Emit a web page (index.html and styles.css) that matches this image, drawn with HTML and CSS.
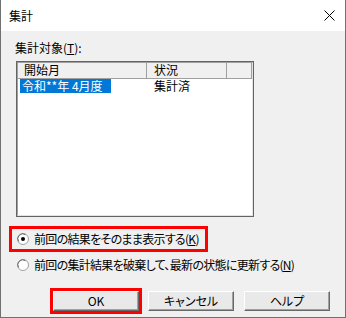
FILE: index.html
```html
<!DOCTYPE html>
<html lang="ja">
<head>
  <meta charset="UTF-8" />
  <title>集計</title>
  <link rel="stylesheet" href="styles.css">
</head>
<body>
  <div class="dialog">
    <div class="titlebar">
      <span class="title">集計</span>
      <svg class="close" width="11" height="11" viewBox="0 0 11 11">
        <path d="M0.5 0.5 L10.5 10.5 M10.5 0.5 L0.5 10.5" stroke="#000" stroke-width="1" fill="none"/>
      </svg>
    </div>

    <div class="content">
      <div class="label">集計対象(<u>T</u>):</div>

      <div class="listview">
        <div class="lv-inner">
          <div class="lv-head">
            <div class="col col-month">開始月</div>
            <div class="col col-status">状況</div>
            <div class="col col-rest"></div>
          </div>
          <div class="lv-row">
            <div class="col col-month"><span class="selected">令和**年 4月度</span></div>
            <div class="col col-status">集計済</div>
          </div>
        </div>
      </div>

      <!-- 集計方法の選択 -->
      <div class="radio-row marked">
        <svg class="radio" width="12" height="12" viewBox="0 0 12 12">
          <circle cx="6" cy="6" r="5.5" fill="#fff" stroke="#a0a0a0"/>
          <path d="M1.6 8.5 A5 5 0 0 1 8.5 1.6" stroke="#696969" fill="none"/>
          <circle cx="6" cy="6" r="2" fill="#000"/>
        </svg>
        <span class="radio-text">前回の結果をそのまま表示する(<u>K</u>)</span>
      </div>
      <div class="radio-row">
        <svg class="radio" width="12" height="12" viewBox="0 0 12 12">
          <circle cx="6" cy="6" r="5.5" fill="#fff" stroke="#a0a0a0"/>
          <path d="M1.6 8.5 A5 5 0 0 1 8.5 1.6" stroke="#696969" fill="none"/>
        </svg>
        <span class="radio-text">前回の集計結果を破棄して、最新の状態に更新する(<u>N</u>)</span>
      </div>

      <div class="buttons">
        <div class="marked-btn"><button class="btn">OK</button></div>
        <button class="btn btn-cancel">キャンセル</button>
        <button class="btn btn-help">ヘルプ</button>
      </div>
    </div>
  </div>
</body>
</html>
```

FILE: styles.css
```css
/* RESET BÁSICO */
* {
  margin: 0;
  padding: 0;
  box-sizing: border-box;
}

body {
  font-family: "Noto Sans CJK JP", "Liberation Sans", sans-serif;
  font-size: 12px;
  line-height: 14px;
  font-feature-settings: "palt";
  color: #000;
  background: #fff;
}

u {
  text-decoration: underline;
  text-underline-offset: 1px;
}

.dialog {
  width: 346px;
  height: 318px;
  background-color: #f0f0f0;
  border: 1px solid #707070;
  border-top: none;
  display: flex;
  flex-direction: column;
}

.titlebar {
  height: 31px;
  background-color: #fff;
  display: flex;
  align-items: center;
  justify-content: space-between;
  padding: 0 10px 0 8px;
}

.title {
  font-size: 12px;
}

.close {
  display: block;
  margin-top: -1px;
}

.content {
  flex: 1;
  padding: 0 7px;
}

.label {
  margin-top: 10px;
  padding-left: 7px;
}

/* Lista de meses */
.listview {
  margin: 6px 0 0 8px;
  width: 238px;
  height: 156px;
  border: 1px solid #646464;
  background-color: #fff;
}

.lv-inner {
  height: 100%;
  border: 1px solid;
  border-color: #a0a0a0 #e3e3e3 #e3e3e3 #a0a0a0;
}

.lv-head {
  display: flex;
  height: 16px;
  background-color: #f0f0f0;
  border-bottom: 1px solid #a0a0a0;
}

.lv-head .col {
  border-right: 1px solid #a0a0a0;
  padding-left: 6px;
}

.lv-row {
  display: flex;
  height: 14px;
}

.col-month {
  width: 129px;
}

.col-status {
  width: 80px;
}

.lv-head .col-status {
  padding-left: 7px;
}

.lv-row .col-month {
  padding-left: 2px;
}

.lv-row .col-status {
  padding-left: 7px;
}

.col-rest {
  flex: 1;
}

.selected {
  display: inline-block;
  background-color: #0078d7;
  color: #fff;
  padding: 0 8px 0 2px;
}

/* Opções */
.radio-row {
  display: flex;
  align-items: center;
  gap: 5px;
  width: 199px;
  height: 26px;
  margin-left: 1px;
  padding-left: 5px;
  border: 3px solid transparent;
  white-space: nowrap;
}

.radio-row.marked {
  margin-top: 9px;
  border-color: #ff0000;
}

.radio {
  display: block;
  flex-shrink: 0;
}

.radio-text {
  letter-spacing: -0.7px;
}

.buttons {
  display: flex;
  align-items: center;
  margin-top: 10px;
  padding-left: 42px;
}

.marked-btn {
  border: 3px solid #ff0000;
}

.btn {
  display: block;
  width: 86px;
  height: 20px;
  font-family: "Noto Sans CJK JP", "Liberation Sans", sans-serif;
  font-size: 12px;
  line-height: 14px;
  font-feature-settings: "palt";
  background-color: #e9e9e9;
  border: 1px solid;
  border-color: #fff #696969 #696969 #fff;
  box-shadow: inset -1px -1px 0 #a0a0a0;
  color: #000;
}

.btn-cancel {
  margin-left: 6px;
}

.btn-help {
  margin-left: 10px;
}
```
